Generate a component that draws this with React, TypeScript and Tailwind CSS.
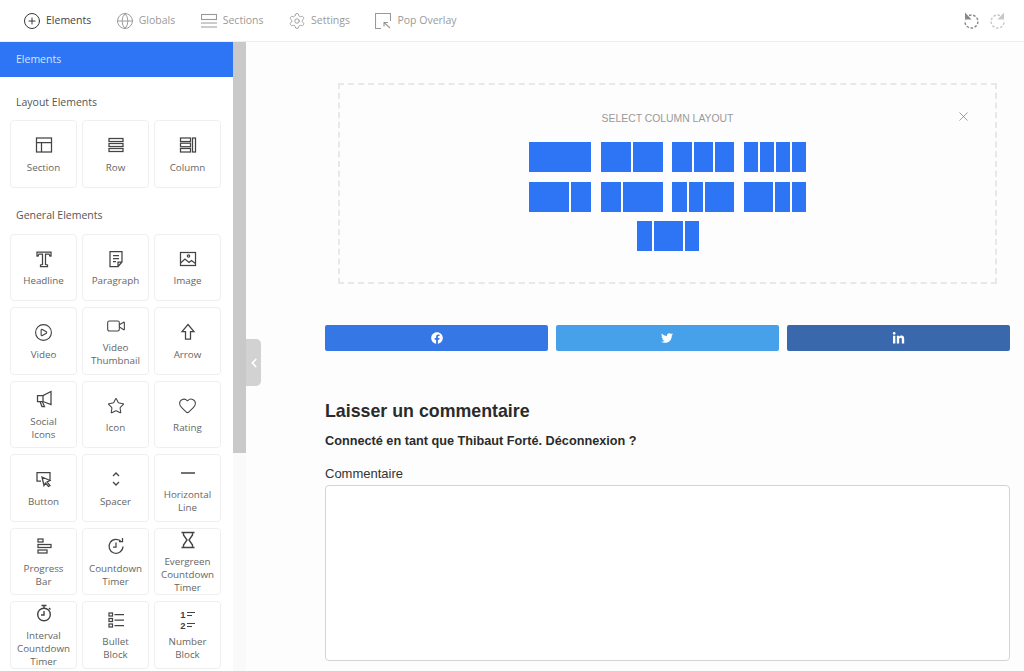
// Page builder: elements sidebar + column layout picker
import type { ReactNode } from 'react';
import { CirclePlay, Video, Star, Heart, Globe, Settings, CirclePlus, X, ChevronLeft } from 'lucide-react';
import { FaFacebook, FaTwitter, FaLinkedinIn } from 'react-icons/fa';

const Svg = ({ children }: { children: ReactNode }) => (
  <svg width="20" height="20" viewBox="0 0 20 20" fill="none" stroke="#444" strokeWidth="1.25">
    {children}
  </svg>
);

const icons: Record<string, ReactNode> = {
  section: <Svg><rect x="2.5" y="3" width="15" height="14" /><path d="M2.5 7.5h15M7.5 7.5V17" /></Svg>,
  row: <Svg><rect x="3" y="3.5" width="14" height="3" /><rect x="3" y="8.5" width="14" height="3" /><rect x="3" y="13.5" width="14" height="3" /></Svg>,
  column: <Svg><rect x="2.5" y="3" width="10" height="3.5" /><rect x="2.5" y="8.2" width="10" height="3.5" /><rect x="2.5" y="13.5" width="10" height="3.5" /><rect x="14.5" y="3" width="3" height="14" /></Svg>,
  headline: <Svg><path d="M3 3h14v4h-1l-1-2h-3.5v10.5l2 .5v1.5H6.5V16l2-.5V5H5L4 7H3z" /></Svg>,
  paragraph: <Svg><path d="M4 2.5h12V13l-4 4.5H4zM12 17.5V13h4M7 6.5h6M7 9.5h6M7 12.5h3" /></Svg>,
  image: <Svg><rect x="2.5" y="3.5" width="15" height="13" /><circle cx="10.5" cy="7" r="1.2" /><path d="M2.5 14l4.5-4 4 3.5 2.5-2 4 3" /></Svg>,
  video: <CirclePlay size={19} color="#444" strokeWidth={1.4} />,
  thumb: <Video size={20} color="#444" strokeWidth={1.3} />,
  arrow: <Svg><path d="M10 2.5l6 7h-3.5v7.5h-5V9.5H4z" /></Svg>,
  social: <Svg><path d="M17 2.5v13L9 12.5H3.5v-6H9zM9 6.5v6M6 12.5l2 5h2.5l-2-4.5" /></Svg>,
  icon: <Star size={18} color="#444" strokeWidth={1.4} />,
  rating: <Heart size={19} color="#444" strokeWidth={1.3} />,
  button: <Svg><path d="M16 12V3.5H3V12h4" /><path d="M8 8l8 3.5-3 1.5 3 3.5-1.5 1-3-3.5-1.5 2.5z" /></Svg>,
  spacer: <Svg><path d="M7 7l3-3 3 3M7 13l3 3 3-3" /></Svg>,
  line: <Svg><path d="M3 10h14" strokeWidth="1.5" /></Svg>,
  progress: <Svg><rect x="4" y="3" width="5" height="3" /><rect x="4" y="8.5" width="13" height="3" /><rect x="4" y="14" width="9" height="3" /></Svg>,
  countdown: <Svg><path d="M15.5 6a7 7 0 1 0 1.5 4.5M13 5.5h3.5V2M10 6.5V11H7" /></Svg>,
  evergreen: <Svg><path d="M3.5 2.5h13M3.5 17.5h13M5.5 2.5v2.5l3.5 5-3.5 5v2.5M14.5 2.5v2.5L11 10l3.5 5v2.5" strokeWidth="1.4" /></Svg>,
  interval: <Svg><circle cx="10" cy="11.5" r="6.3" strokeWidth="1.4" /><path d="M7.5 2.5h5M10 2.5v2.7M10 8v4H7M15 5l1.5 1.5" strokeWidth="1.4" /></Svg>,
  bullet: <Svg><rect x="3" y="3" width="3.5" height="3" /><rect x="3" y="8.5" width="3.5" height="3" /><rect x="3" y="14" width="3.5" height="3" /><path d="M8.5 4.5H18M8.5 10H18M8.5 15.5H18" /></Svg>,
  number: (
    <div className="flex flex-col text-[9.5px] leading-[11px] font-bold text-[#444] font-['Liberation_Sans']">
      <div className="flex items-center gap-[1px]">
        <span>1</span>
        <svg width="8" height="6" stroke="#444" strokeWidth="1.2"><path d="M0 1.5h8M0 4.5h5" /></svg>
      </div>
      <div className="flex items-center gap-[1px]">
        <span>2</span>
        <svg width="8" height="6" stroke="#444" strokeWidth="1.2"><path d="M0 1.5h8M0 4.5h5" /></svg>
      </div>
    </div>
  ),
};

const layoutItems = [
  { label: ['Section'], icon: 'section' },
  { label: ['Row'], icon: 'row' },
  { label: ['Column'], icon: 'column' },
];

const generalItems = [
  { label: ['Headline'], icon: 'headline' },
  { label: ['Paragraph'], icon: 'paragraph' },
  { label: ['Image'], icon: 'image' },
  { label: ['Video'], icon: 'video' },
  { label: ['Video', 'Thumbnail'], icon: 'thumb' },
  { label: ['Arrow'], icon: 'arrow' },
  { label: ['Social', 'Icons'], icon: 'social' },
  { label: ['Icon'], icon: 'icon' },
  { label: ['Rating'], icon: 'rating' },
  { label: ['Button'], icon: 'button' },
  { label: ['Spacer'], icon: 'spacer' },
  { label: ['Horizontal', 'Line'], icon: 'line' },
  { label: ['Progress', 'Bar'], icon: 'progress' },
  { label: ['Countdown', 'Timer'], icon: 'countdown' },
  { label: ['Evergreen', 'Countdown', 'Timer'], icon: 'evergreen' },
  { label: ['Interval', 'Countdown', 'Timer'], icon: 'interval' },
  { label: ['Bullet', 'Block'], icon: 'bullet' },
  { label: ['Number', 'Block'], icon: 'number' },
];

// widths of the blue cells in each 62px layout preset
const presets = [
  [62],
  [30, 30],
  [20, 19, 20],
  [14, 14, 14, 14],
  [40, 20],
  [20, 40],
  [15, 14, 29],
  [29, 15, 14],
  [15, 29, 14],
];

function ElementCard({ label, icon }: { label: string[]; icon: string }) {
  return (
    <div className="h-[67.5px] pt-[1px] rounded-[4px] border border-[#efefef] bg-white flex flex-col items-center justify-center">
      <div className="h-[20px] flex items-center justify-center mb-[5.5px]">{icons[icon]}</div>
      {label.map((l) => (
        <span key={l} className="text-[9.8px] leading-[13px] text-[#666]">{l}</span>
      ))}
    </div>
  );
}

function Preset({ cells }: { cells: number[] }) {
  return (
    <div className="flex w-[62px] h-[30px] gap-[2px]">
      {cells.map((w, i) => (
        <div key={i} className="h-full bg-[#2e75f6]" style={{ width: w }} />
      ))}
    </div>
  );
}

function NavItem({ icon, label, active }: { icon: ReactNode; label: string; active?: boolean }) {
  return (
    <div className={`flex items-center gap-[6px] text-[10.5px] ${active ? 'text-[#444]' : 'text-[#9a9a9a]'}`}>
      <div className="w-[16px] h-[16px] flex items-center justify-center">{icon}</div>
      <span>{label}</span>
    </div>
  );
}

function DashedArrow({ color, flip }: { color: string; flip?: boolean }) {
  return (
    <svg width="18" height="18" viewBox="0 0 18 18" fill="none" stroke={color} strokeWidth="1.4" className={flip ? '-scale-x-100' : ''}>
      <path d="M6 3.5a6.5 6.5 0 1 1-4 5" strokeDasharray="2.6 1.6" />
      <path d="M2 0.5v7h6.5z" fill={color} stroke="none" />
    </svg>
  );
}

export default function App() {
  return (
    <div className="w-[1024px] h-[671px] overflow-hidden flex flex-col bg-white" style={{ fontFamily: '"Open Sans", sans-serif' }}>
      {/* Top bar */}
      <header className="h-[42px] shrink-0 border-b border-[#eeeeee] flex items-center pl-[24px] pr-[18px] gap-[25.5px]">
        <NavItem active label="Elements" icon={<CirclePlus className="shrink-0" size={18} color="#333" strokeWidth={1.3} />} />
        <NavItem label="Globals" icon={<Globe className="shrink-0" size={18} color="#999" strokeWidth={1.3} />} />
        <NavItem
          label="Sections"
          icon={
            <svg width="16" height="16" viewBox="0 0 16 16" fill="none" stroke="#999" strokeWidth="1.1">
              <rect x="0.5" y="1.5" width="15" height="5" />
              <path d="M0 10h16M0 14h16" />
            </svg>
          }
        />
        <NavItem label="Settings" icon={<Settings className="shrink-0" size={18} color="#999" strokeWidth={1.2} />} />
        <NavItem
          label="Pop Overlay"
          icon={
            <svg width="16" height="16" viewBox="0 0 16 16" fill="none" stroke="#999" strokeWidth="1.1">
              <path d="M6 15.5H0.5V0.5h15V8" />
              <path d="M15 15L9 9.5M9 13.5V9.5h4" />
            </svg>
          }
        />
        <div className="ml-auto flex items-center gap-[7px]">
          <DashedArrow color="#888" />
          <DashedArrow color="#c8c8c8" flip />
        </div>
      </header>

      <div className="flex-1 flex min-h-0 relative">
        {/* Sidebar */}
        <aside className="w-[233px] shrink-0 bg-white overflow-hidden">
          <div className="h-[35px] bg-[#2e75f6] flex items-center px-[16px] text-[10.5px] text-[#d6e4fd]">Elements</div>
          <h3 className="pt-[18px] pb-[11px] pl-[16px] text-[10.5px] leading-[14px] text-[#555]">Layout Elements</h3>
          <div className="grid grid-cols-3 gap-x-[5px] pl-[10px] pr-[12px]">
            {layoutItems.map((it) => (
              <ElementCard key={it.icon} {...it} />
            ))}
          </div>
          <h3 className="pt-[20px] pb-[12px] pl-[16px] text-[10.5px] leading-[14px] text-[#555]">General Elements</h3>
          <div className="grid grid-cols-3 gap-x-[5px] gap-y-[6px] pl-[10px] pr-[12px]">
            {generalItems.map((it) => (
              <ElementCard key={it.icon} {...it} />
            ))}
          </div>
        </aside>

        {/* Scrollbar */}
        <div className="w-[13px] shrink-0 bg-[#fafafa]">
          <div className="h-[411px] bg-[#c9c9c9]" />
        </div>

        {/* Collapse handle */}
        <div className="absolute left-[246px] top-[297px] w-[15px] h-[47px] bg-[#d2d2d2] rounded-r-[5px] flex items-center justify-center">
          <ChevronLeft size={14} color="#fff" strokeWidth={3} />
        </div>

        {/* Canvas */}
        <main className="flex-1 min-w-0 bg-[#fdfdfd] pl-[79px] pr-[14px] pt-[41px]" style={{ fontFamily: '"Liberation Sans", Arial, sans-serif' }}>
          <div className="relative ml-[13px] w-[659px] h-[201px] border-2 border-dashed border-[#e8e8e8] pt-[27px] flex flex-col items-center">
            <X size={15} color="#777" strokeWidth={1.1} className="absolute right-[24px] top-[24px]" />
            <p className="text-[10.4px] leading-[14px] text-[#999] uppercase">Select column layout</p>
            <div className="mt-[16px] flex flex-wrap justify-center gap-x-[9.6px] gap-y-[9.5px] w-[277px]">
              {presets.map((cells, i) => (
                <Preset key={i} cells={cells} />
              ))}
            </div>
          </div>

          <div className="mt-[41px] grid grid-cols-3 gap-[7.5px]">
            <div className="h-[26px] rounded-[2px] bg-[#3578e5] flex items-center justify-center text-white text-[12px]"><FaFacebook /></div>
            <div className="h-[26px] rounded-[2px] bg-[#46a0ea] flex items-center justify-center text-white text-[12px]"><FaTwitter /></div>
            <div className="h-[26px] rounded-[2px] bg-[#3a68ad] flex items-center justify-center text-white text-[13px]"><FaLinkedinIn /></div>
          </div>

          <h2 className="mt-[49px] text-[17.8px] leading-[22px] font-bold text-[#2b2b2b]">Laisser un commentaire</h2>
          <p className="mt-[11px] text-[12.7px] leading-[16px] font-bold text-[#2b2b2b]">Connecté en tant que Thibaut Forté. Déconnexion ?</p>
          <label className="block mt-[16px] text-[13px] leading-[18px] text-[#333]">Commentaire</label>
          <div className="mt-[2px] h-[176px] rounded-[4px] border border-[#d4d4d4] bg-white" />
        </main>
      </div>
    </div>
  );
}
